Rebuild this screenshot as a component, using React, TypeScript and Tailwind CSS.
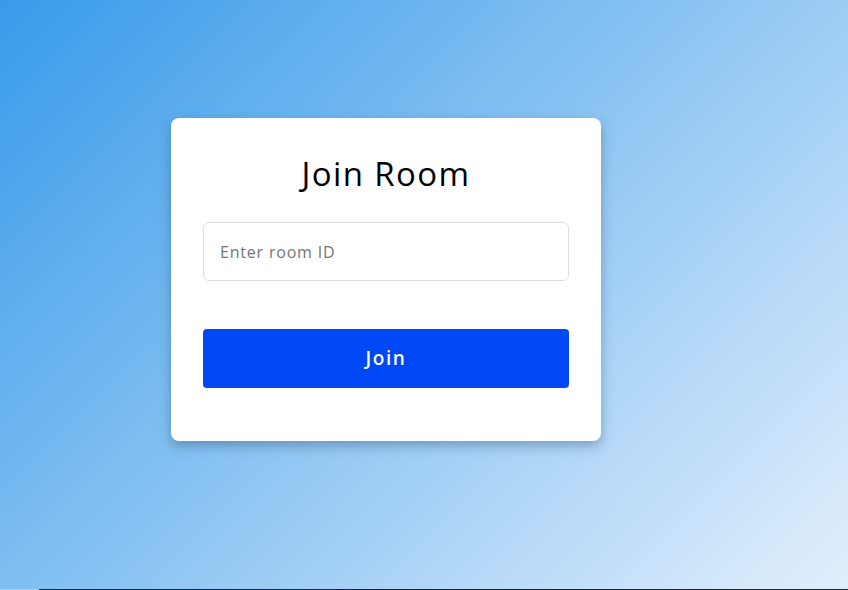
export default function App() {
  return (
    <div className="w-[848px] h-[590px] flex flex-col overflow-hidden" style={{ fontFamily: '"Open Sans", "Liberation Sans", sans-serif' }}>
      <div className="h-[589px] bg-[linear-gradient(135deg,#389bea_0%,#e2effc_100%)] pt-[118px] pl-[171px]">
        {/* Card */}
        <div className="w-[430px] bg-white rounded-lg px-8 pt-8 pb-[53px] shadow-[0_5px_12px_rgba(30,60,90,0.35)]">
          <h2 className="text-[33px] leading-[48px] tracking-[1.4px] text-center text-black mb-6">Join Room</h2>
          <input
            type="text"
            placeholder="Enter room ID"
            className="block w-full h-[59px] px-4 text-[16px] tracking-[0.8px] border border-[#dddddd] rounded-md outline-none placeholder:text-[#757575]"
          />
          <button className="mt-12 w-full h-[59px] bg-[#0047f5] rounded text-white text-[19px] tracking-[1.6px] font-semibold">
            Join
          </button>
        </div>
      </div>
      <div className="h-px flex">
        <div className="w-[39px] bg-[#c3c6c8]" />
        <div className="flex-1 bg-[#1a2b33]" />
      </div>
    </div>
  );
}
